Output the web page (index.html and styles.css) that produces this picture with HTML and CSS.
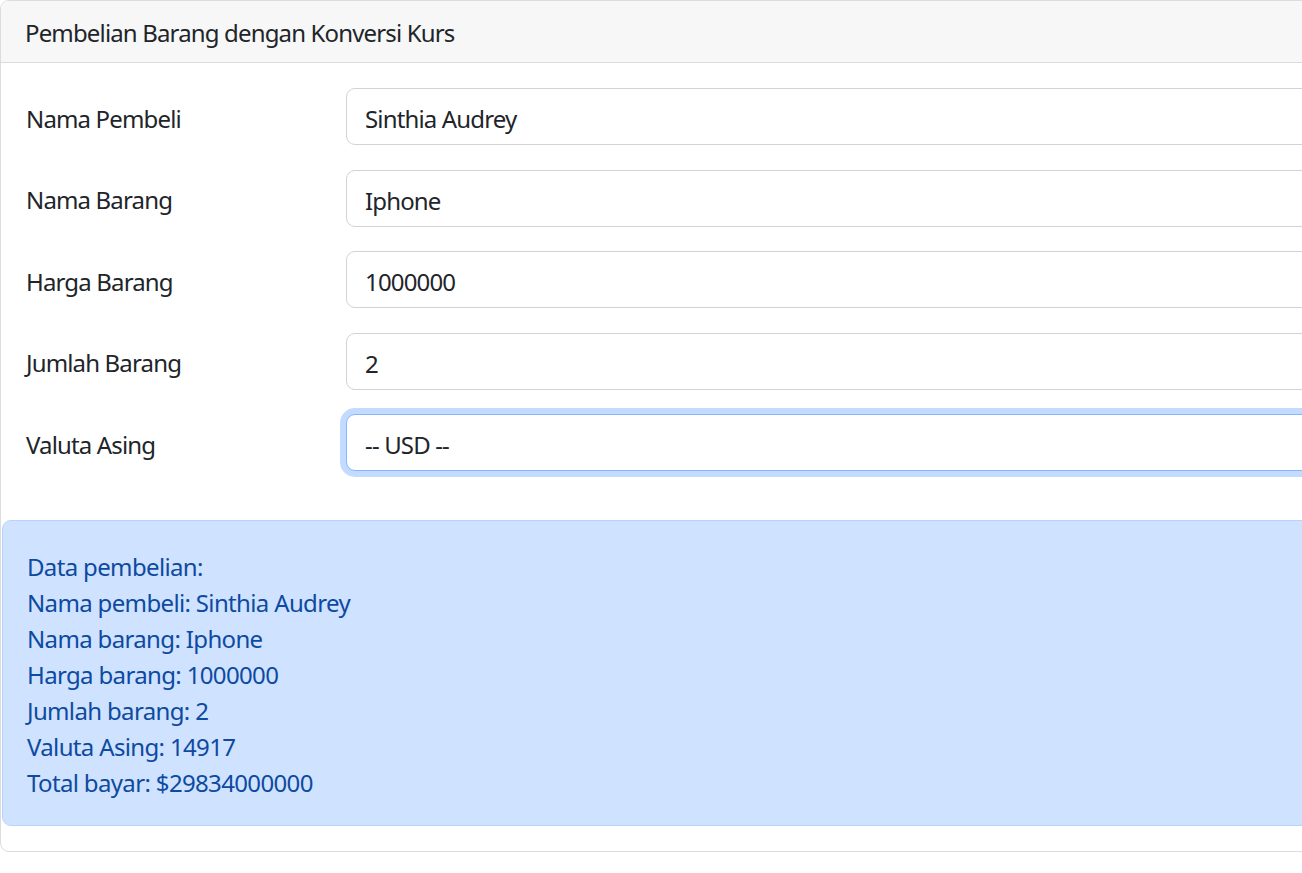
FILE: index.html
```html
<!DOCTYPE html>
<html lang="id">
<head>
<meta charset="utf-8">
<title>Pembelian Barang dengan Konversi Kurs</title>
<link rel="stylesheet" href="styles.css">
</head>
<body>
<div class="card">
  <div class="card-header">Pembelian Barang dengan Konversi Kurs</div>
  <div class="card-body">
    <form class="form">
      <div class="row">
        <label class="label" for="nama">Nama Pembeli</label>
        <input class="control" id="nama" type="text" value="Sinthia Audrey">
      </div>
      <div class="row">
        <label class="label" for="barang">Nama Barang</label>
        <input class="control" id="barang" type="text" value="Iphone">
      </div>
      <div class="row">
        <label class="label" for="harga">Harga Barang</label>
        <input class="control" id="harga" type="text" value="1000000">
      </div>
      <div class="row">
        <label class="label" for="jumlah">Jumlah Barang</label>
        <input class="control" id="jumlah" type="text" value="2">
      </div>
      <div class="row">
        <label class="label" for="valuta">Valuta Asing</label>
        <select class="control select focused" id="valuta">
          <option>-- USD --</option>
        </select>
      </div>
    </form>
  </div>
  <div class="alert">
    Data pembelian:<br>
    Nama pembeli: Sinthia Audrey<br>
    Nama barang: Iphone<br>
    Harga barang: 1000000<br>
    Jumlah barang: 2<br>
    Valuta Asing: 14917<br>
    Total bayar: $29834000000
  </div>
</div>
</body>
</html>
```
FILE: styles.css
```css
html, body {
  margin: 0;
  padding: 0;
  overflow: hidden;
  background: #fff;
}
body {
  font-family: "Noto Sans", "Open Sans", sans-serif;
  font-size: 24px;
  line-height: 36px;
  letter-spacing: -0.85px;
  color: #212529;
}
.card {
  width: 1360px;
  border: 1px solid #dcdcdc;
  border-radius: 9px;
  background: #fff;
  overflow: hidden;
}
.card-header {
  padding: 14px 25px 11px 24px;
  background: #f7f7f7;
  border-bottom: 1px solid #dcdcdc;
}
.card-body {
  padding: 25px 25px 24px;
}
.form {
  margin: 0;
}
.row {
  display: grid;
  grid-template-columns: 320px 1fr;
  align-items: center;
  margin-bottom: 24.5px;
}
.label {
  display: block;
  padding-top: 4px;
}
.control {
  display: block;
  box-sizing: border-box;
  width: 100%;
  height: 57px;
  margin: 0;
  padding: 4px 18px 0;
  font: inherit;
  letter-spacing: inherit;
  color: #212529;
  background: #fff;
  border: 1px solid #ced4da;
  border-radius: 9px;
  outline: none;
}
.select {
  appearance: none;
  -webkit-appearance: none;
}
.focused {
  border-color: #86b7fe;
  box-shadow: 0 0 0 6px rgba(13, 110, 253, 0.25);
}
.alert {
  margin: 0 0 25px 1px;
  padding: 28px 24px 24px;
  letter-spacing: -0.65px;
  color: #0d4aa0;
  background: #cfe2ff;
  border: 1px solid #b6d4fe;
  border-radius: 9px;
}
```
